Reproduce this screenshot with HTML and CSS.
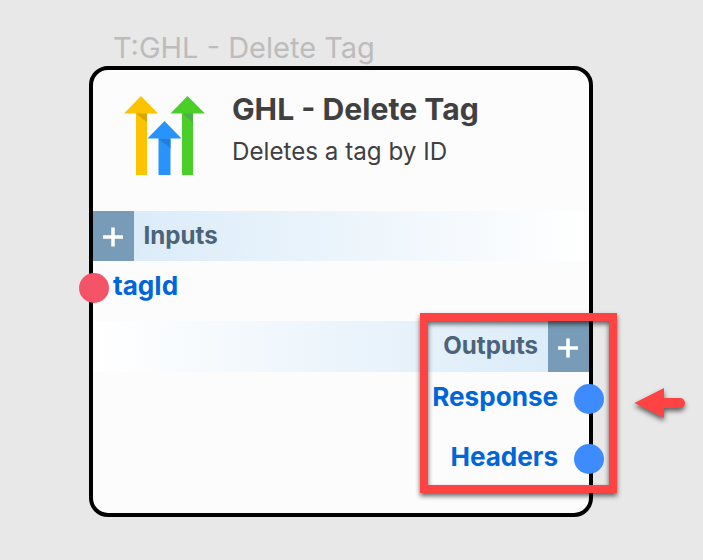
FILE: index.html
```html
<!DOCTYPE html>
<html lang="en">
<head>
<meta charset="utf-8">
<title>GHL - Delete Tag</title>
<link rel="stylesheet" href="styles.css">
</head>
<body>
<main class="node-wrap">
  <div class="node-label">T:GHL - Delete Tag</div>
  <section class="node">
    <header class="node-header">
      <svg class="logo" width="82" height="80" viewBox="0 0 82 80">
        <path fill="#fdc300" d="M17 0 34 17.500H23V79H12V17.500H0Z"/>
        <path fill="#d9a500" d="M12 17.500H23V26.500Z"/>
        <path fill="#49cf27" d="M63.500 0 81 17.500H69V79H58V17.500H46.500Z"/>
        <path fill="#4bb148" d="M58 17.500H69V26.500Z"/>
        <path fill="#2894fb" d="M40.500 25 57.500 42.500H46.500V79H34.500V42.500H23.500Z"/>
        <path fill="#2080dc" d="M34.500 43H46.500V52.500Z"/>
      </svg>
      <div class="titles">
        <h1>GHL - Delete Tag</h1>
        <p>Deletes a tag by ID</p>
      </div>
    </header>
    <div class="bar bar-in">
      <span class="add"><svg width="20" height="20" viewBox="0 0 20 20"><path d="M10 .5V19.500M0 10H20"/></svg></span>
      <span class="bar-title">Inputs</span>
    </div>
    <div class="port port-in"><span>tagId</span><i class="dot"></i></div>
    <div class="bar bar-out">
      <span class="bar-title">Outputs</span>
      <span class="add"><svg width="20" height="20" viewBox="0 0 20 20"><path d="M10 .5V19.500M0 10H20"/></svg></span>
    </div>
    <div class="port port-out"><span>Response</span><i class="dot"></i></div>
    <div class="port port-out"><span>Headers</span><i class="dot"></i></div>
  </section>
</main>
<div class="highlight"></div>
<svg class="arrow" width="66" height="50" viewBox="0 0 66 50">
  <path fill="#ff4343" d="M4.500 23 34 8V18H50A5 5 0 0 1 50 28H34V38Z"/>
</svg>
</body>
</html>
```
FILE: styles.css
```css
* { box-sizing: border-box; }

body {
  margin: 0;
  height: 560px;
  overflow: hidden;
  position: relative;
  background: #e8e8e8;
  font-family: Inter, "Liberation Sans", sans-serif;
}

.node-wrap {
  width: 504px;
  margin-left: 89px;
  padding-top: 29.500px;
}

.node-label {
  height: 36.300px;
  padding-left: 24px;
  font-size: 29px;
  line-height: 36px;
  color: #bcbcbc;
  white-space: nowrap;
}

.node {
  width: 503.600px;
  height: 451px;
  border: 4px solid #000;
  border-radius: 19px;
  background: #fcfcfc;
}

.node-header {
  display: flex;
  height: 141px;
  padding: 26px 0 0 31px;
}

.logo { flex: none; }

.titles {
  padding-left: 26px;
  color: #404040;
  white-space: nowrap;
}

h1 {
  margin: -5.500px 0 0;
  font-size: 30.150px;
  line-height: 38px;
  font-weight: 700;
}

p {
  margin: 8px 0 0;
  font-size: 24.200px;
  line-height: 32px;
}

.bar {
  display: flex;
  height: 50px;
}

.bar-in { background: linear-gradient(to right, #d8eaf8, #fff); }

.bar-out {
  justify-content: flex-end;
  height: 50.500px;
  background: linear-gradient(to left, #d8eaf8, #fff);
}

.add {
  display: flex;
  align-items: center;
  justify-content: center;
  width: 40.500px;
  padding-top: 3px;
  background: #789bb7;
}

.add path {
  fill: none;
  stroke: #fff;
  stroke-width: 3.500;
}

.bar-title {
  padding: 0 10px;
  font-size: 24.150px;
  line-height: 49px;
  font-weight: 700;
  color: #4c637c;
}

.port {
  position: relative;
  height: 60.500px;
  font-size: 26.100px;
  line-height: 50px;
  font-weight: 700;
  color: #0066d9;
}

.port-in { padding-left: 20px; }

.port-in + .bar-out { margin-top: .2px; }

.port-out {
  height: 60px;
  padding-right: 30.500px;
  text-align: right;
}

.dot {
  position: absolute;
  top: 12px;
  width: 30.500px;
  height: 30.500px;
  border-radius: 50%;
}

.port-in .dot {
  left: -14.500px;
  background: #f55367;
}

.port-out .dot {
  top: 12px;
  right: -15.800px;
  background: #3d8bfd;
}

.highlight {
  position: absolute;
  left: 420px;
  top: 313px;
  width: 197px;
  height: 180px;
  border: 8px solid #ff4343;
  filter: drop-shadow(0 3px 2.500px rgba(0, 0, 0, .6));
}

.arrow {
  position: absolute;
  left: 630px;
  top: 380px;
  filter: drop-shadow(0 3px 2.500px rgba(0, 0, 0, .6));
}
```
